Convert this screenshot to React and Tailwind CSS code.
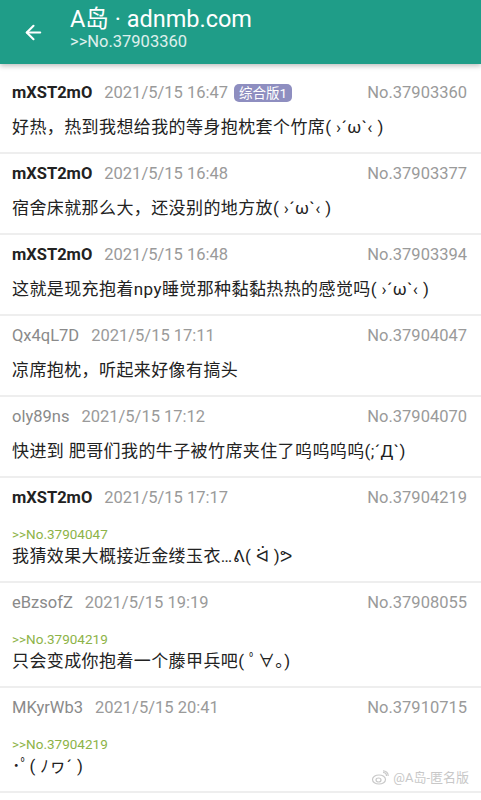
import { ArrowLeft } from "lucide-react";

const posts = [
  { name: "mXST2mO", po: true, time: "2021/5/15 16:47", no: "37903360", tag: "综合版1", text: "好热，热到我想给我的等身抱枕套个竹席( ›´ω`‹ )" },
  { name: "mXST2mO", po: true, time: "2021/5/15 16:48", no: "37903377", text: "宿舍床就那么大，还没别的地方放( ›´ω`‹ )" },
  { name: "mXST2mO", po: true, time: "2021/5/15 16:48", no: "37903394", text: "这就是现充抱着npy睡觉那种黏黏热热的感觉吗( ›´ω`‹ )" },
  { name: "Qx4qL7D", time: "2021/5/15 17:11", no: "37904047", text: "凉席抱枕，听起来好像有搞头" },
  { name: "oly89ns", time: "2021/5/15 17:12", no: "37904070", text: "快进到 肥哥们我的牛子被竹席夹住了呜呜呜呜(;´Д`)" },
  { name: "mXST2mO", po: true, time: "2021/5/15 17:17", no: "37904219", ref: "37904047", text: "我猜效果大概接近金缕玉衣…ᕕ( ᐛ )ᕗ" },
  { name: "eBzsofZ", time: "2021/5/15 19:19", no: "37908055", ref: "37904219", text: "只会变成你抱着一个藤甲兵吧( ﾟ∀。)" },
  { name: "MKyrWb3", time: "2021/5/15 20:41", no: "37910715", ref: "37904219", text: "･ﾟ( ﾉヮ´ )" },
];

const font = { fontFamily: "Roboto, 'Noto Sans CJK SC', sans-serif" };

function Post({ p }) {
  return (
    <div className="px-3 pt-[10px] pb-[13px] border-b-2 border-[#eeeeee]">
      <div className="flex items-center h-5 text-[16.5px] leading-5">
        <span className={p.po ? "font-bold text-[#222222]" : "text-[#8a8a8a]"}>{p.name}</span>
        <span className="ml-[12px] text-[#9a9a9a]">{p.time}</span>
        {p.tag ? (
          <span className="ml-[6px] px-[5px] h-[18px] leading-[18px] rounded-[5px] bg-[#8e8ec0] text-white text-[13.5px]">
            {p.tag}
          </span>
        ) : null}
        <span className="ml-auto pr-[2px] text-[#9a9a9a]">No.{p.no}</span>
      </div>
      {p.ref ? (
        <div className="mt-[17px] text-[13.5px] leading-[18px] text-[#8db348]">&gt;&gt;No.{p.ref}</div>
      ) : null}
      <div className={`${p.ref ? "mt-[1px]" : "mt-[12px]"} text-[17px] leading-6 tracking-[0.4px] text-[#222222]`}>
        {p.text}
      </div>
    </div>
  );
}

export default function App() {
  return (
    <div className="relative w-[481px] h-[800px] overflow-hidden bg-white" style={font}>
      <div className="relative z-10 h-[64px] bg-[#1f9d88] flex items-start shadow-[0_2px_5px_rgba(0,0,0,0.25)]">
        <div className="w-[70px] h-[64px] flex items-center justify-center pl-[2px] pr-[6px]">
          <ArrowLeft className="w-[23px] h-[23px] text-white" strokeWidth={2.2} />
        </div>
        <div className="flex flex-col pt-[6px]">
          <div className="text-[23.5px] leading-[26px] text-white">A岛 · adnmb.com</div>
          <div className="text-[16.5px] leading-[20px] text-white/85">&gt;&gt;No.37903360</div>
        </div>
      </div>
      <div className="pt-[9px]">
        {posts.map((p, i) => (
          <Post key={`${p.no}-${i}`} p={p} />
        ))}
      </div>
      <div className="absolute right-[12px] bottom-[13px] flex items-center gap-1 text-[13px] text-[#c8c8c8]">
        <svg width="18" height="15" viewBox="0 0 18 15" fill="none" stroke="#c8c8c8" strokeWidth="1.2">
          <ellipse cx="8" cy="9.5" rx="6.5" ry="4.5" />
          <ellipse cx="7.5" cy="10" rx="2.5" ry="2" />
          <path d="M12 2.5c2 0 3.5 1.5 3.5 3.5M12 0.8c3 0 5.2 2.2 5.2 5.2" />
        </svg>
        <span>@A岛-匿名版</span>
      </div>
    </div>
  );
}
